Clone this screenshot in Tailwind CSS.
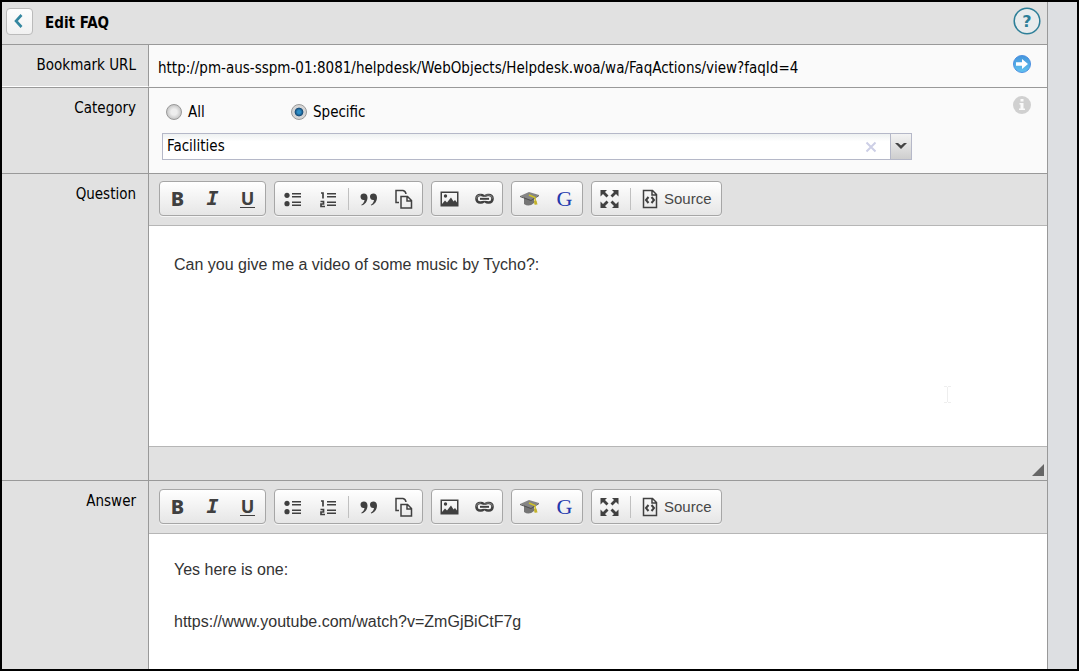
<!DOCTYPE html>
<html lang="en">
<head>
    <meta charset="UTF-8">
    <meta name="viewport" content="width=device-width, initial-scale=1.0">
    <title>Edit FAQ</title>
    <script src="https://cdn.jsdelivr.net/npm/@tailwindcss/browser@4"></script>
</head>
<body class="font-['DejaVu_Sans_Condensed',Tahoma,sans-serif] text-[15px] text-black">
    <div class="flex min-h-screen border-2 border-black bg-[#dddfe2]">
        <form class="mr-[29px] flex min-w-0 flex-1 flex-col border-r border-[#999] bg-[#e1e1e1]">

            <!-- Header -->
            <header class="flex h-[43px] items-center border-b border-[#999] pb-1 pl-1 pr-[6px]">
                <button type="button" aria-label="Back" class="flex size-[27px] items-center justify-center rounded border border-[#bbb] bg-linear-to-b from-[#fdfdfd] to-[#f1f1f1]">
                    <svg class="size-4" viewBox="0 0 16 16" fill="none" stroke="#3487a0" stroke-width="2.6"><path d="M9.500 2 4 8l5.500 6"/></svg>
                </button>
                <h1 class="ml-3 flex-1 pt-1 text-[15px] font-bold">Edit FAQ</h1>
                <button type="button" aria-label="Help">
                    <svg class="size-7" viewBox="0 0 28 28"><circle cx="14" cy="14" r="12.800" fill="#e8eced" stroke="#2d7f98" stroke-width="1.500"/><text x="14" y="20" text-anchor="middle" font-family="DejaVu Sans" font-weight="bold" font-size="16" fill="#2d7f98">?</text></svg>
                </button>
            </header>

            <!-- Bookmark URL -->
            <div class="flex h-[43px] border-b border-[#999]">
                <div class="w-[147px] shrink-0 border-r border-b border-r-[#999] border-b-white pr-3 pt-2 text-right leading-6">Bookmark URL</div>
                <div class="flex flex-1 items-center bg-[#fafafa] pl-[9px] pr-4">
                    <span class="flex-1 pt-1">http://pm-aus-sspm-01:8081/helpdesk/WebObjects/Helpdesk.woa/wa/FaqActions/view?faqId=4</span>
                    <button type="button" aria-label="Open" class="mb-1">
                        <svg class="size-[18px]" viewBox="0 0 18 18"><defs><linearGradient id="blue" x2="0" y2="1"><stop stop-color="#4595dc"/><stop offset="1" stop-color="#60c2ef"/></linearGradient></defs><circle cx="9" cy="9" r="8.500" fill="url(#blue)" stroke="#4c8fe0"/><path d="M3 7.300h6V4l6 5-6 5v-3.300H3z" fill="#fff"/></svg>
                    </button>
                </div>
            </div>

            <!-- Category -->
            <div class="flex h-[86px] border-b border-[#999]">
                <div class="w-[147px] shrink-0 border-r border-[#999] pr-3 pt-2 text-right leading-6">Category</div>
                <div class="flex flex-1 items-start bg-[#fafafa] pl-[13px] pr-4 pt-2">
                    <div class="mr-[101px] flex-1 pt-1">
                        <div class="flex h-6 items-center pl-1">
                            <label class="flex w-[125px] items-center gap-[6px]">
                                <input type="radio" name="scope" class="size-4 appearance-none rounded-full border border-[#999] bg-radial from-[#eee] from-30% to-[#c8c8c8] to-70% checked:border-[#999] checked:from-[#2e8fc8] checked:from-15% checked:via-[#174c78] checked:via-40% checked:to-[#d5d5d5] checked:to-48%">All
                            </label>
                            <label class="flex items-center gap-[6px]">
                                <input type="radio" name="scope" checked class="size-4 appearance-none rounded-full border border-[#999] bg-radial from-[#eee] from-30% to-[#c8c8c8] to-70% checked:border-[#999] checked:from-[#2e8fc8] checked:from-15% checked:via-[#174c78] checked:via-40% checked:to-[#d5d5d5] checked:to-48%">Specific
                            </label>
                        </div>
                        <div class="mt-[9px] flex h-[27px] border border-[#b5b8c8] bg-linear-to-b from-[#eef1f1] to-white to-30%">
                            <input type="text" aria-label="Category" value="Facilities" class="min-w-0 flex-1 bg-transparent pl-1">
                            <button type="button" aria-label="Clear" class="px-[13px]">
                                <svg class="size-3" viewBox="0 0 12 12" stroke="#cdcfe6" stroke-width="2"><path d="m1.500 1.500 9 9m0-9-9 9"/></svg>
                            </button>
                            <button type="button" aria-label="Show categories" class="flex w-[21px] justify-center border-l border-[#b5b8c8] bg-linear-to-b from-[#f3f3f3] to-[#cecece] pt-2">
                                <svg class="h-2 w-3" viewBox="0 0 12 8"><path d="M0 1h3l3 2.500L9 1h3L6 7z" fill="#444"/></svg>
                            </button>
                        </div>
                    </div>
                    <button type="button" aria-label="Information">
                        <svg class="size-[18px]" viewBox="0 0 18 18" fill="#fafafa"><circle cx="9" cy="9" r="9" fill="#d0d0d0"/><path d="M7.500 3h3v2.500h-3zM6.500 7h4v5.500h1.500V14H6v-1.500h1.500v-4h-1z"/></svg>
                    </button>
                </div>
            </div>

            <!-- Question -->
            <div class="flex border-b border-[#999]">
                <label for="question" class="w-[147px] shrink-0 border-r border-[#999] pr-3 pt-2 text-right leading-6">Question</label>
                <div class="flex flex-1 flex-col">
                    <div class="toolbar flex h-[52px] items-start gap-2 border-b border-[#b6b6b6] pl-[10px] pt-[7px]"></div>
                    <div class="relative flex">
                        <textarea id="question" class="h-[220px] flex-1 resize-none bg-white px-[25px] pt-[26px] font-['Liberation_Sans',Arial,sans-serif] text-base leading-[26px] text-[#333] outline-none">Can you give me a video of some music by Tycho?:</textarea>
                        <svg class="absolute right-[95px] top-40 h-[17px] w-[9px]" viewBox="0 0 9 17" stroke="#eee" fill="none"><path d="M1 .5h3m1 0h3M4.500 1v15M1 16.500h3m1 0h3"/></svg>
                    </div>
                    <div class="flex h-[34px] items-end justify-end border-t border-[#b6b6b6] pb-1 pr-[3px]">
                        <svg class="size-3" viewBox="0 0 12 12"><path d="M12 0v12H0z" fill="#666"/></svg>
                    </div>
                </div>
            </div>

            <!-- Answer -->
            <div class="flex flex-1">
                <label for="answer" class="w-[147px] shrink-0 border-r border-[#999] pr-3 pt-2 text-right leading-6">Answer</label>
                <div class="flex flex-1 flex-col">
                    <div class="toolbar flex h-[53px] items-start gap-2 border-b border-[#b6b6b6] pl-[10px] pt-2"></div>
                    <textarea id="answer" class="min-h-[130px] flex-1 resize-none bg-white px-[25px] pt-[23px] font-['Liberation_Sans',Arial,sans-serif] text-base leading-[26px] text-[#333] outline-none">Yes here is one:

https://www.youtube.com/watch?v=ZmGjBiCtF7g</textarea>
                </div>
            </div>
        </form>
    </div>

    <!-- Editor toolbar, shared by both editors -->
    <template id="toolbar">
        <div class="flex h-[35px] items-center rounded border border-[#a6a6a6] bg-linear-to-b from-white to-[#e6e6e6] font-['Noto_Sans',sans-serif] text-[#404040] shadow-[0_1px_0_#f5f5f5]">
            <button type="button" title="Bold" class="w-[35px] text-[20px] leading-[33px] font-extrabold">B</button>
            <button type="button" title="Italic" class="w-[35px] font-['DejaVu_Sans_Mono',monospace] text-[20px] leading-[33px] font-bold italic">I</button>
            <button type="button" title="Underline" class="flex w-[35px] justify-center">
                <span class="h-[19px] border-b border-[#404040] px-px text-[18px] leading-[18px] font-bold">U</span>
            </button>
        </div>
        <div class="flex h-[35px] items-center rounded border border-[#a6a6a6] bg-linear-to-b from-white to-[#e6e6e6] pr-px shadow-[0_1px_0_#f5f5f5]">
            <button type="button" aria-label="Bulleted list" class="flex w-[35px] justify-center">
                <svg class="size-5" viewBox="0 0 20 20" fill="#404040"><circle cx="4" cy="6.300" r="2.600"/><circle cx="4" cy="14.700" r="2.600"/><path d="M9 4h9v1.500H9zM9 7h9v1.500H9zM9 12.500h9V14H9zM9 15.500h9V17H9z"/></svg>
            </button>
            <button type="button" aria-label="Numbered list" class="flex w-[35px] justify-center">
                <svg class="size-5" viewBox="0 0 20 20" fill="#404040"><path d="M9 4h9v1.500H9zM9 7h9v1.500H9zM9 12.500h9V14H9zM9 15.500h9V17H9z"/><path d="M3 4h2v5.500M2.500 12.500h3V15H3v2.500h4" fill="none" stroke="#404040" stroke-width="1.700"/></svg>
            </button>
            <span class="ml-[3px] mr-[2px] h-[22px] w-px bg-[#c0c0c0]"></span>
            <button type="button" aria-label="Block quote" class="flex w-[35px] justify-center">
                <svg class="size-5" viewBox="0 0 20 20" fill="#404040"><path d="M1.500 7.700C1.500 5.500 3 4.500 4.900 4.500 7 4.500 8.500 6 8.500 8.500c0 4-2.500 7-5.800 8l-.4-.8c2-1 2.900-2.700 3.200-4.800-2 .6-4-.800-4-3.200zM11 7.700c0-2.200 1.500-3.200 3.400-3.200 2.100 0 3.600 1.500 3.600 4 0 4-2.500 7-5.800 8l-.4-.8c2-1 2.900-2.700 3.200-4.800-2 .6-4-.8-4-3.200z"/></svg>
            </button>
            <button type="button" aria-label="Templates" class="flex w-[35px] justify-center">
                <svg class="size-5" viewBox="0 0 20 20" fill="none" stroke="#404040" stroke-width="1.500"><path d="M5 13.500H2V1.500h7q2.500.5 3 3.500M7 7.500h6.500l4 4v7.500H7zM13 7.500v4.500h4.500"/></svg>
            </button>
        </div>
        <div class="flex h-[35px] items-center rounded border border-[#a6a6a6] bg-linear-to-b from-white to-[#e6e6e6] shadow-[0_1px_0_#f5f5f5]">
            <button type="button" aria-label="Image" class="flex w-[35px] justify-center">
                <svg class="size-5" viewBox="0 0 20 20" fill="#404040"><path fill-rule="evenodd" d="M.5 2.500h18v15H.5zM2 4v11l3-3.500 2 2 4-5 2.500 4 1.500-1.500 2 2.500V4z"/><circle cx="5.500" cy="7" r="1.700"/></svg>
            </button>
            <button type="button" aria-label="Link" class="flex w-[35px] justify-center">
                <svg class="size-5" viewBox="0 0 20 20" fill="none" stroke="#404040" stroke-width="2.600"><rect x="1.500" y="6" width="8" height="7.500" rx="3.500"/><rect x="9.500" y="6" width="8" height="7.500" rx="3.500"/><path d="M1.500 9.500q0-3.500 3.500-3.500h1m3.500 0h4q4 0 4 3.500" stroke="#aaa" stroke-width=".6"/><path d="M5 9.800h9" stroke="#fff" stroke-width="4"/><path d="M5 9.800h9" stroke-width="2"/></svg>
            </button>
        </div>
        <div class="flex h-[35px] items-center rounded border border-[#a6a6a6] bg-linear-to-b from-white to-[#e6e6e6] shadow-[0_1px_0_#f5f5f5]">
            <button type="button" aria-label="Knowledge base" class="flex w-[35px] justify-center">
                <svg class="size-5" viewBox="0 0 20 20"><path d="M4 8v7q5 3.500 10-1V8z" fill="#757575"/><path d="M0 7 9 3l10 3-8 5z" fill="#858585"/><path d="m0 7 11 4 8-5v1l-8 5L0 8z" fill="#505050"/><path d="m9 6 6 2.500.5 7" fill="none" stroke="#cfc126" stroke-width="1.500"/><path d="m14 12 2.500-.5 1 4h-3z" fill="#c3b22b"/></svg>
            </button>
            <button type="button" title="Google" class="w-[35px] font-['Liberation_Serif',serif] text-[22px] leading-[33px] text-[#2439ad]">G</button>
        </div>
        <div class="flex h-[35px] items-center rounded border border-[#a6a6a6] bg-linear-to-b from-white to-[#e6e6e6] shadow-[0_1px_0_#f5f5f5]">
            <button type="button" aria-label="Maximize" class="flex w-[35px] justify-center">
                <svg class="size-5" viewBox="0 0 20 20" fill="#404040"><path d="M.5 1h6.500L5 3l3.500 3.500-2 2L3 5l-2.500 2.500zM18.500 1v6.500L16 5l-3.500 3.500-2-2L14 3l-2-2zM.5 19v-6.500L3 15l3.500-3.500 2 2L5 17l2 2zM18.500 19H12l2-2-3.500-3.500 2-2L16 15l2.500-2.500z"/></svg>
            </button>
            <span class="ml-[3px] mr-[9px] h-[22px] w-px bg-[#c0c0c0]"></span>
            <button type="button" class="flex items-center gap-1 pt-px pr-[9px] font-['Liberation_Sans',Arial,sans-serif] text-[15px] text-[#484848]">
                <svg class="size-5" viewBox="0 0 20 20" fill="none" stroke="#404040" stroke-width="1.500"><path d="M3.500 1.500h9l4 4v13h-13zM12 2v4h4.500"/><path d="M8.500 8 6 11l2.500 3m3-6 2.500 3-2.500 3" stroke-width="2"/></svg>Source
            </button>
        </div>
    </template>

    <script>
        const toolbar = document.getElementById('toolbar');
        document.querySelectorAll('.toolbar').forEach(el => {
            el.appendChild(toolbar.content.cloneNode(true));
        });
    </script>
</body>
</html>
